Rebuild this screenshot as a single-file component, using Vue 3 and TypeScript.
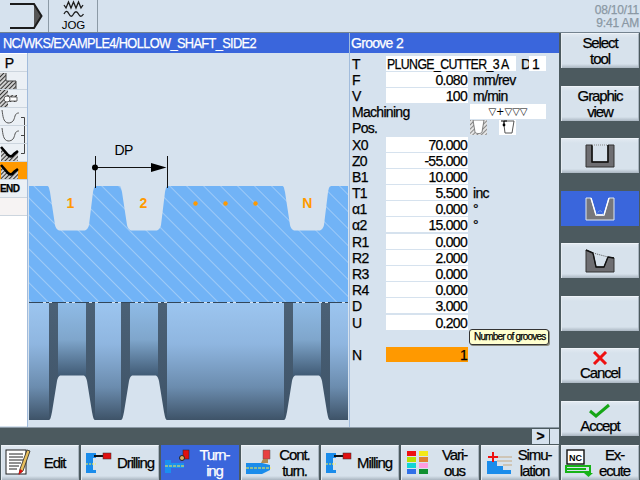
<template>
  <div class="screen">
    <header class="top">
      <div class="top-cell">
        <svg width="48" height="32" viewBox="0 0 48 32"><path d="M34 4L41.5 16L34 28Z" fill="#555" /><path d="M10 4H34L41.5 16L34 28H10" fill="none" stroke="#1c1c1c" stroke-width="2" /></svg>
      </div>
      <div class="top-cell">
        <svg width="48" height="32" viewBox="0 0 48 32">
          <path d="M15 5l2 3 2.5-6 2.5 6 2.5-6 2.5 6 2.5-6 2.5 6 2-3M15 14c2-4 3.5-3 5 0s3 3 4.500 0 3.500-3 5 0 3 3 5 0" fill="none" stroke="#1c1c1c" stroke-width="1.3" />
          <text x="24.500" y="29" text-anchor="middle" class="jog">JOG</text>
        </svg>
      </div>
      <div class="clock">
        <span>08/10/11</span>
        <span>9:41 AM</span>
      </div>
    </header>

    <div class="middle">
      <div class="work">
        <div class="work-main">
          <section class="graphic-side">
            <div class="title path"><span class="narrow path-text">NC/WKS/EXAMPLE4/HOLLOW_SHAFT_SIDE2</span></div>
            <div class="graphic-body">
              <ul class="steps">
                <li v-for="s in steps" :key="s.id" class="step" :class="{ current: s.current }">
                  <span v-if="s.label" class="step-label" :class="{ big: s.label === 'P' }">{{ s.label }}</span>
                  <svg v-else width="27" height="18" viewBox="0 0 27 18">
                    <template v-if="s.kind === 'corner'">
                      <path d="M0 1h6v8h10v8H0Z" fill="url(#stepHatch)" />
                      <path d="M6 1v8h10v8" fill="none" stroke="#444" />
                    </template>
                    <template v-else-if="s.kind === 'bore'">
                      <path d="M0 0h8v5h9v7H8v6H0Z" fill="url(#stepHatch)" />
                      <path d="M7 7h10v4H7Z" fill="#fff" stroke="#444" stroke-width="0.8" />
                      <circle cx="7" cy="9" r="3" fill="#fff" stroke="#444" stroke-width="0.8" />
                    </template>
                    <template v-else-if="s.kind === 'groove'">
                      <path d="M2 2C3 8 3 14 8 15C13 15 14 12 15 8C16 5 18 5 19 5" fill="none" stroke="#555" stroke-width="1" />
                    </template>
                    <template v-else>
                      <path d="M1 5V17H18V8L14 10C12 13 10 13 8 11Z" fill="url(#stepHatch)" />
                      <path d="M1 3L8 11C10 13 12 13 14 10L18 7" fill="none" stroke="#000" stroke-width="2.6" />
                    </template>
                    <path v-if="s.bracket" :d="s.bracket" fill="none" stroke="#444" stroke-width="1" />
                  </svg>
                </li>
                <li class="step blank"></li>
              </ul>
              <svg class="drawing" width="322" height="374" viewBox="28 53 322 374">
                <defs>
                  <pattern id="stepHatch" width="3" height="3" patternUnits="userSpaceOnUse" patternTransform="rotate(45)">
                    <rect width="3" height="3" fill="#cfcfcf" />
                    <rect width="1" height="3" fill="#333" />
                  </pattern>
                  <pattern id="posHatch" width="3" height="3" patternUnits="userSpaceOnUse" patternTransform="rotate(45)">
                    <rect width="3" height="3" fill="#e4e4e4" />
                    <rect width="1" height="3" fill="#888" />
                  </pattern>
                  <pattern id="hatch" width="12" height="12" patternUnits="userSpaceOnUse" patternTransform="rotate(-45 0 0)">
                    <rect width="12" height="12" fill="#71b3f6" />
                    <rect width="0.8" height="12" fill="#a9d0f8" />
                  </pattern>
                  <linearGradient id="shaft" x1="0" y1="0" x2="0" y2="1">
                    <stop offset="0" stop-color="#9cc5ef" />
                    <stop offset="0.35" stop-color="#8fb6e0" />
                    <stop offset="0.72" stop-color="#6b8cae" />
                    <stop offset="1" stop-color="#3e5368" />
                  </linearGradient>
                  <linearGradient id="neck" x1="0" y1="0" x2="0" y2="1">
                    <stop offset="0" stop-color="#8fbbe6" />
                    <stop offset="0.5" stop-color="#7fa6cc" />
                    <stop offset="1" stop-color="#405a74" />
                  </linearGradient>
                  <linearGradient id="flank" x1="0" y1="0" x2="0" y2="1">
                    <stop offset="0" stop-color="#4b6176" />
                    <stop offset="1" stop-color="#3e5368" />
                  </linearGradient>
                </defs>

                <path :d="sectionPath" fill="url(#hatch)" />

                <rect x="29" y="303" width="319" height="117" fill="url(#shaft)" />
                <g v-for="x in grooveXs" :key="x">
                  <rect :x="x" y="303" width="46" height="117" fill="url(#flank)" />
                  <rect :x="x + 9" y="303" width="28" height="73" fill="url(#neck)" />
                  <path :d="`M${x - 1} 420.5C${x + 2} 420 ${x + 2} 416 ${x + 3} 412L${x + 8} 381C${x + 9} 377 ${x + 10} 375.5 ${x + 12} 375.5H${x + 34} C${x + 36} 375.5 ${x + 37} 377 ${x + 38} 381L${x + 43} 412C${x + 44} 416 ${x + 44} 420 ${x + 47} 420.5Z`" fill="#d6e2ee" />
                </g>
                <line x1="29" y1="302.5" x2="348" y2="302.5" stroke="#33475b" stroke-dasharray="14 3 3 3" />

                <text x="70" y="208" class="mark">1</text>
                <text x="143" y="208" class="mark">2</text>
                <circle v-for="x in [195.5, 225.5, 255.5]" :key="x" :cx="x" cy="203.5" r="2.2" fill="#ff9900" />
                <text x="307" y="208" class="mark">N</text>

                <path d="M95.5 156V188M167.5 156V188" stroke="#111" fill="none" />
                <line x1="95" y1="167.5" x2="152" y2="167.5" stroke="#111" />
                <circle cx="95" cy="167.5" r="3" fill="#000" />
                <path d="M151 163L166.5 167.5L151 172Z" fill="#000" />
                <text x="123.500" y="155" class="dim">DP</text>
              </svg>
            </div>
          </section>

          <section class="form-side">
            <div class="title form-title">Groove 2</div>
            <div class="form">
              <div class="row">
                <span class="lab">T</span>
                <span class="tool"><span class="narrow tool-text">PLUNGE_CUTTER_3 A</span></span>
                <span class="d-lab">D</span>
                <span class="d-val">1</span>
              </div>
              <div class="row">
                <span class="lab">F</span><span class="val">0.080</span><span class="unit">mm/rev</span>
              </div>
              <div class="row">
                <span class="lab">V</span><span class="val">100</span><span class="unit">m/min</span>
              </div>
              <div class="row">
                <span class="lab wide">Machining</span>
                <span class="machining">▽+▽▽▽</span>
              </div>
              <div class="row">
                <span class="lab">Pos.</span>
                <span class="pos-icons">
                  <svg width="17" height="15" viewBox="0 0 17 15">
                    <rect width="17" height="15" fill="url(#posHatch)" />
                    <path d="M3 0L5 12C5 14 12 14 12 12L14 0Z" fill="#fff" stroke="#666" stroke-width="0.8" />
                  </svg>
                  <svg width="17" height="15" viewBox="0 0 17 15">
                    <rect width="17" height="15" fill="#fff" />
                    <path d="M5 1H15L13 13H6L5 5" fill="none" stroke="#555" />
                    <path d="M2 1H8M5 1V5" stroke="#000" stroke-width="1.2" fill="none" />
                    <circle cx="5" cy="5" r="1.4" fill="#000" />
                  </svg>
                </span>
              </div>
              <div v-for="f in fields" :key="f.label" class="row">
                <span class="lab">{{ f.label }}</span><span class="val">{{ f.value }}</span><span class="unit">{{ f.unit }}</span>
              </div>
              <div class="row hint-row">
                <span class="tooltip">Number of grooves</span>
              </div>
              <div class="row">
                <span class="lab">N</span><span class="val active">1</span>
              </div>
            </div>
          </section>
        </div>
        <div class="strip">
          <span class="scroll-btn">&gt;</span>
          <span class="scroll-end"></span>
        </div>
      </div>

      <aside class="side-keys">
        <button class="key">Select<br />tool</button>
        <button class="key">Graphic<br />view</button>
        <button class="key">
          <svg width="30" height="24" viewBox="0 0 30 24"><path d="M1 1H7V18H23V1H29V23H1Z" fill="#6e6e72" stroke="#333" /><path d="M7 1V18H23V1" fill="none" stroke="#111" stroke-width="1.5" /><path d="M7 1H23" stroke="#888" stroke-dasharray="1 1" /></svg>
        </button>
        <button class="key on">
          <svg width="30" height="24" viewBox="0 0 30 24"><path d="M1 1H6L11 18H19L24 1H29V23H1Z" fill="#77777b" stroke="#dfe8f2" /><path d="M6 1L11 18H19L24 1" fill="none" stroke="#fff" stroke-width="1.4" /><path d="M11 18L15 13L19 18" fill="none" stroke="#8ab4f0" stroke-dasharray="1 1" /></svg>
        </button>
        <button class="key">
          <svg width="30" height="24" viewBox="0 0 30 24"><path d="M1 1L8 4L11 18H19L23 8L29 9V23H1Z" fill="#6e6e72" stroke="#333" /><path d="M1 1L8 4L11 18H19L23 8L29 9" fill="none" stroke="#111" stroke-width="1.4" /><path d="M8 4L23 8" stroke="#555" stroke-dasharray="1 1" /></svg>
        </button>
        <button class="key"></button>
        <button class="key stack">
          <svg width="16" height="14" viewBox="0 0 16 14"><path d="M2 1L14 13M14 1L2 13" stroke="#ee1111" stroke-width="3" /></svg>
          Cancel
        </button>
        <button class="key stack">
          <svg width="22" height="15" viewBox="0 0 22 15"><path d="M1 8L7 13L20 2" fill="none" stroke="#16a616" stroke-width="3" /></svg>
          Accept
        </button>
      </aside>
    </div>

    <footer class="bottom-keys">
      <button v-for="k in bottomKeys" :key="k.id" class="bkey" :class="{ on: k.on }">
        <svg class="bicon" width="34" height="28" viewBox="0 0 34 28">
          <template v-if="k.id === 'edit'">
            <rect x="3" y="1" width="20" height="24" fill="#fff" stroke="#222" />
            <path d="M6 5H20M6 8H20M6 11H20M6 14H18M6 17H16M6 20H14" stroke="#222" />
            <path d="M27 2L20 22L16 25L17 20L24 1Z" fill="#e8c060" stroke="#222" stroke-width="0.8" />
            <path d="M15.500 26L17 20L20 22Z" fill="#e01010" />
          </template>
          <template v-else-if="k.id === 'drill' || k.id === 'mill'">
            <path d="M3 4H13V9H10V21H13V24H3Z" fill="#1a8ceb" />
            <path d="M3 15H13" stroke="#ffee44" stroke-dasharray="2 1" />
            <path d="M11 7H21" stroke="#111" stroke-width="2" />
            <rect x="20" y="4" width="8" height="6" fill="#e01010" stroke="#333" stroke-width="0.5" />
          </template>
          <template v-else-if="k.id === 'turn'">
            <path d="M2 11H8V14H21V19H8V24H2Z" fill="#1a90f0" />
            <path d="M2 17H21" stroke="#ffee44" stroke-dasharray="3 1" />
            <rect x="20" y="1" width="6" height="9" fill="#e01010" stroke="#222" stroke-width="0.5" />
            <circle cx="19" cy="9" r="2.500" fill="#d8b060" stroke="#222" />
          </template>
          <template v-else-if="k.id === 'cont'">
            <path d="M3 14H19L27 16V21L19 25H3Z" fill="#1a8ceb" />
            <path d="M3 19H28" stroke="#ffee44" stroke-dasharray="3 1" />
            <path d="M20 1H27V10H20Z" fill="#e84040" stroke="#555" stroke-width="0.5" />
            <path d="M20 10H25V14H18Z" fill="#b08a50" />
          </template>
          <template v-else-if="k.id === 'various'">
            <rect v-for="c in swatches" :key="c.x + '-' + c.y" :x="c.x" :y="c.y" width="9" height="5" :fill="c.fill" />
          </template>
          <template v-else-if="k.id === 'sim'">
            <path d="M4 12H14V17H20V21H28V25H4Z" fill="#1a8ceb" />
            <path d="M14 8H29M14 12H29M20 16H29" stroke="#c6a880" />
            <path d="M5 8H15M10 3V13" stroke="#ee1111" stroke-width="2" />
          </template>
          <template v-else>
            <rect x="4" y="1" width="17" height="14" fill="#fff" stroke="#111" stroke-width="1.4" />
            <text x="12.500" y="11.500" text-anchor="middle" class="nc">NC</text>
            <path d="M3 17H27V23H3ZM3 20H23" fill="none" stroke="#17b317" stroke-width="2" />
            <path d="M21 24H30L25.500 28Z" fill="#17b317" />
          </template>
        </svg>
        <span class="blabel" v-html="k.text"></span>
      </button>
    </footer>
  </div>
</template>

<script setup lang="ts">
interface Step {
  id: number;
  label?: string;
  kind?: string;
  current?: boolean;
  bracket?: string;
}

const steps: Step[] = [
  { id: 1, label: "P" },
  { id: 2, kind: "corner" },
  { id: 3, kind: "bore" },
  { id: 4, kind: "groove", bracket: "M21 9.5H24.500V18" },
  { id: 5, kind: "groove", bracket: "M21 9.5H24.500M24.500 0V18" },
  { id: 6, kind: "solid", bracket: "M21 9.5H24.500V0" },
  { id: 7, kind: "solid", current: true },
  { id: 8, label: "END" },
];

const fields = [
  { label: "X0", value: "70.000", unit: "" },
  { label: "Z0", value: "-55.000", unit: "" },
  { label: "B1", value: "10.000", unit: "" },
  { label: "T1", value: "5.500", unit: "inc" },
  { label: "α1", value: "0.000", unit: "°" },
  { label: "α2", value: "15.000", unit: "°" },
  { label: "R1", value: "0.000", unit: "" },
  { label: "R2", value: "2.000", unit: "" },
  { label: "R3", value: "0.000", unit: "" },
  { label: "R4", value: "0.000", unit: "" },
  { label: "D", value: "3.000", unit: "" },
  { label: "U", value: "0.200", unit: "" },
];

const grooveXs = [49, 121, 284];

// hatched section with the three grooves cut out of it
const sectionPath = (() => {
  let d = "M29 186";
  for (const x of grooveXs) {
    d += `H${x - 2}C${x} 186 ${x} 188 ${x + 1} 192L${x + 6} 225C${x + 7} 229 ${x + 9} 230.5 ${x + 11} 230.5H${x + 35}C${x + 37} 230.5 ${x + 39} 229 ${x + 40} 225L${x + 44} 192C${x + 45} 188 ${x + 45} 186 ${x + 48} 186`;
  }
  return d + "H348V302H29Z";
})();

const swatches = [
  { x: 4, y: 2, fill: "#ee1111" },
  { x: 16, y: 2, fill: "#f4e818" },
  { x: 4, y: 8, fill: "#b8e000" },
  { x: 16, y: 8, fill: "#e08030" },
  { x: 4, y: 14, fill: "#11d4d4" },
  { x: 16, y: 14, fill: "#ff9ce0" },
  { x: 4, y: 20, fill: "#3070e8" },
  { x: 16, y: 20, fill: "#109030" },
];

const bottomKeys = [
  { id: "edit", text: "Edit" },
  { id: "drill", text: "Drilling" },
  { id: "turn", text: "Turn-<br>ing", on: true },
  { id: "cont", text: "Cont.<br>turn." },
  { id: "mill", text: "Milling" },
  { id: "various", text: "Vari-<br>ous" },
  { id: "sim", text: "Simu-<br>lation" },
  { id: "exec", text: "Ex-<br>ecute" },
];
</script>

<style>
html,
body {
  margin: 0;
  overflow: hidden;
}
</style>

<style scoped>
.screen {
  width: 640px;
  height: 480px;
  display: flex;
  flex-direction: column;
  overflow: hidden;
  background: #d6e2ee;
  font-family: "Liberation Sans", sans-serif;
  font-size: 14px;
  letter-spacing: -0.7px;
  -webkit-text-stroke: 0.25px currentColor;
  color: #000;
}

.narrow {
  display: inline-block;
  transform-origin: left center;
  white-space: nowrap;
}

.path-text {
  transform: scaleX(0.915);
}

.tool-text {
  transform: translateX(1px) scaleX(0.88);
}

.top {
  height: 32px;
  flex: none;
  display: flex;
  border-bottom: 1px solid #74838f;
}

.top-cell {
  width: 48px;
  border-right: 1px solid #8c9aa6;
}

.jog {
  font-size: 11.5px;
  letter-spacing: 0;
}

.clock {
  margin-left: auto;
  display: flex;
  flex-direction: column;
  align-items: flex-end;
  gap: 1px;
  padding: 4px 1px 0 0;
  color: #8a98a4;
  font-size: 12px;
  line-height: 12px;
  letter-spacing: -0.2px;
}

.middle {
  flex: 1;
  min-height: 0;
  display: flex;
  background: #4c5a5f;
}

.work {
  width: 559px;
  display: flex;
  flex-direction: column;
}

.work-main {
  height: 394px;
  display: flex;
  background: #d6e2ee;
  border-bottom: 1px solid #8c9aa6;
}

.title {
  height: 20px;
  line-height: 20px;
  background: #3a66dc;
  color: #fff;
}

.path {
  padding-left: 3px;
}

.form-title {
  padding-left: 1px;
}

.graphic-side {
  width: 349px;
  flex: none;
}

.graphic-body {
  display: flex;
  height: 373px;
  background: #fff;
}

.steps {
  width: 27px;
  flex: none;
  margin: 0;
  padding: 1px 0 0;
  list-style: none;
}

.step {
  height: 18px;
  box-sizing: border-box;
  background: #ebf0f5;
  border-bottom: 1px solid #ccd5de;
  display: flex;
  align-items: center;
  overflow: hidden;
}

.step svg {
  flex: none;
}

.step.current {
  background: #ff9900;
}

.step.blank {
  background: #f6f3f3;
}

.step-label {
  width: 19px;
  text-align: center;
  font-size: 10px;
  font-weight: 700;
  letter-spacing: -0.6px;
}

.step-label.big {
  font-size: 14px;
  font-weight: 400;
  letter-spacing: 0;
}

.drawing {
  display: block;
  flex: none;
  background: #d6e2ee;
  border-left: 1px solid #a2bcdc;
}

.mark {
  fill: #ff9900;
  stroke: none;
  font-size: 14px;
  font-weight: 700;
  text-anchor: middle;
  letter-spacing: -0.7px;
}

.dim {
  font-size: 14px;
  text-anchor: middle;
}

.form-side {
  flex: 1;
  border-left: 1px solid #a2bcdc;
}

.form {
  padding-top: 2px;
}

.row {
  height: 16.2px;
  display: flex;
  align-items: center;
  white-space: nowrap;
}

.row > span {
  height: 15px;
  line-height: 17px;
}

.lab {
  width: 34px;
  flex: none;
  padding-left: 2px;
}

.lab.wide {
  width: 80px;
}

.val {
  width: 81px;
  padding-right: 1px;
  flex: none;
  background: #fff;
  text-align: right;
  font-variant-numeric: tabular-nums;
}

.val.active {
  background: #ff9900;
}

.unit {
  margin-left: 5px;
}

.tool {
  width: 130px;
  flex: none;
  background: #fff;
}

.d-lab {
  margin-left: 5px;
  width: 8px;
}

.d-val {
  width: 14px;
  background: #fff;
  padding-left: 3px;
}

.row .machining {
  width: 76px;
  margin-left: 38px;
  background: #fff;
  text-align: center;
  font-family: "DejaVu Sans", sans-serif;
  font-size: 10px;
  letter-spacing: 0;
  line-height: 15px;
  -webkit-text-stroke: 0;
}

.pos-icons {
  margin-left: 84px;
  display: flex;
  gap: 12px;
}

.pos-icons svg {
  display: block;
}

.hint-row {
  position: relative;
}

.row .tooltip {
  position: absolute;
  left: 119px;
  top: -1px;
  height: 14px;
  width: 70px;
  padding: 0 4px;
  line-height: 14px;
  font-size: 10px;
  letter-spacing: -0.8px;
  background: #ffffd0;
  border: 1px solid #333;
  border-radius: 3px;
  box-shadow: 1px 1px 0 #8c8c80;
  z-index: 2;
}

.strip {
  flex: 1;
  display: flex;
  justify-content: flex-end;
  align-items: flex-start;
  padding-top: 1px;
}

.scroll-btn,
.scroll-end {
  height: 15px;
  line-height: 15px;
  background: #d6e2ee;
  text-align: center;
}

.scroll-btn {
  width: 17px;
  font-weight: 700;
  letter-spacing: 0;
  margin-right: 1px;
}

.scroll-end {
  width: 9px;
}

.side-keys {
  width: 81px;
  flex: none;
  display: flex;
  flex-direction: column;
  gap: 17.5px;
  padding: 0 1px 0 2px;
  box-sizing: border-box;
}

.key,
.bkey {
  border: 0;
  margin: 0;
  padding: 0;
  font: inherit;
  font-size: 15px;
  letter-spacing: -1.1px;
  color: #000;
  background: linear-gradient(#e1e9f1, #d7e2ec 12%, #d7e2ec 88%, #aab6c1);
  border-top: 1px solid #eef3f8;
  border-left: 1px solid #e6ecf2;
  border-right: 1px solid #a9b5c0;
}

.key {
  height: 35px;
  flex: none;
  line-height: 16px;
  text-align: center;
  display: flex;
  flex-direction: column;
  align-items: center;
  justify-content: center;
}

.key.on,
.bkey.on {
  background: #3a66dc;
  border-color: #3a66dc;
  color: #fff;
}

.bottom-keys {
  height: 35px;
  flex: none;
  display: flex;
  gap: 2px;
  padding-left: 1px;
  background: #4c5a5f;
}

.bkey {
  width: 78px;
  flex: none;
  display: flex;
  align-items: center;
  text-align: center;
}

.bicon {
  flex: none;
  margin-left: 1px;
}

.blabel {
  flex: 1;
  padding-right: 6px;
  line-height: 16px;
}

.nc {
  font-size: 9px;
  font-weight: 700;
  letter-spacing: 0;
}
</style>
